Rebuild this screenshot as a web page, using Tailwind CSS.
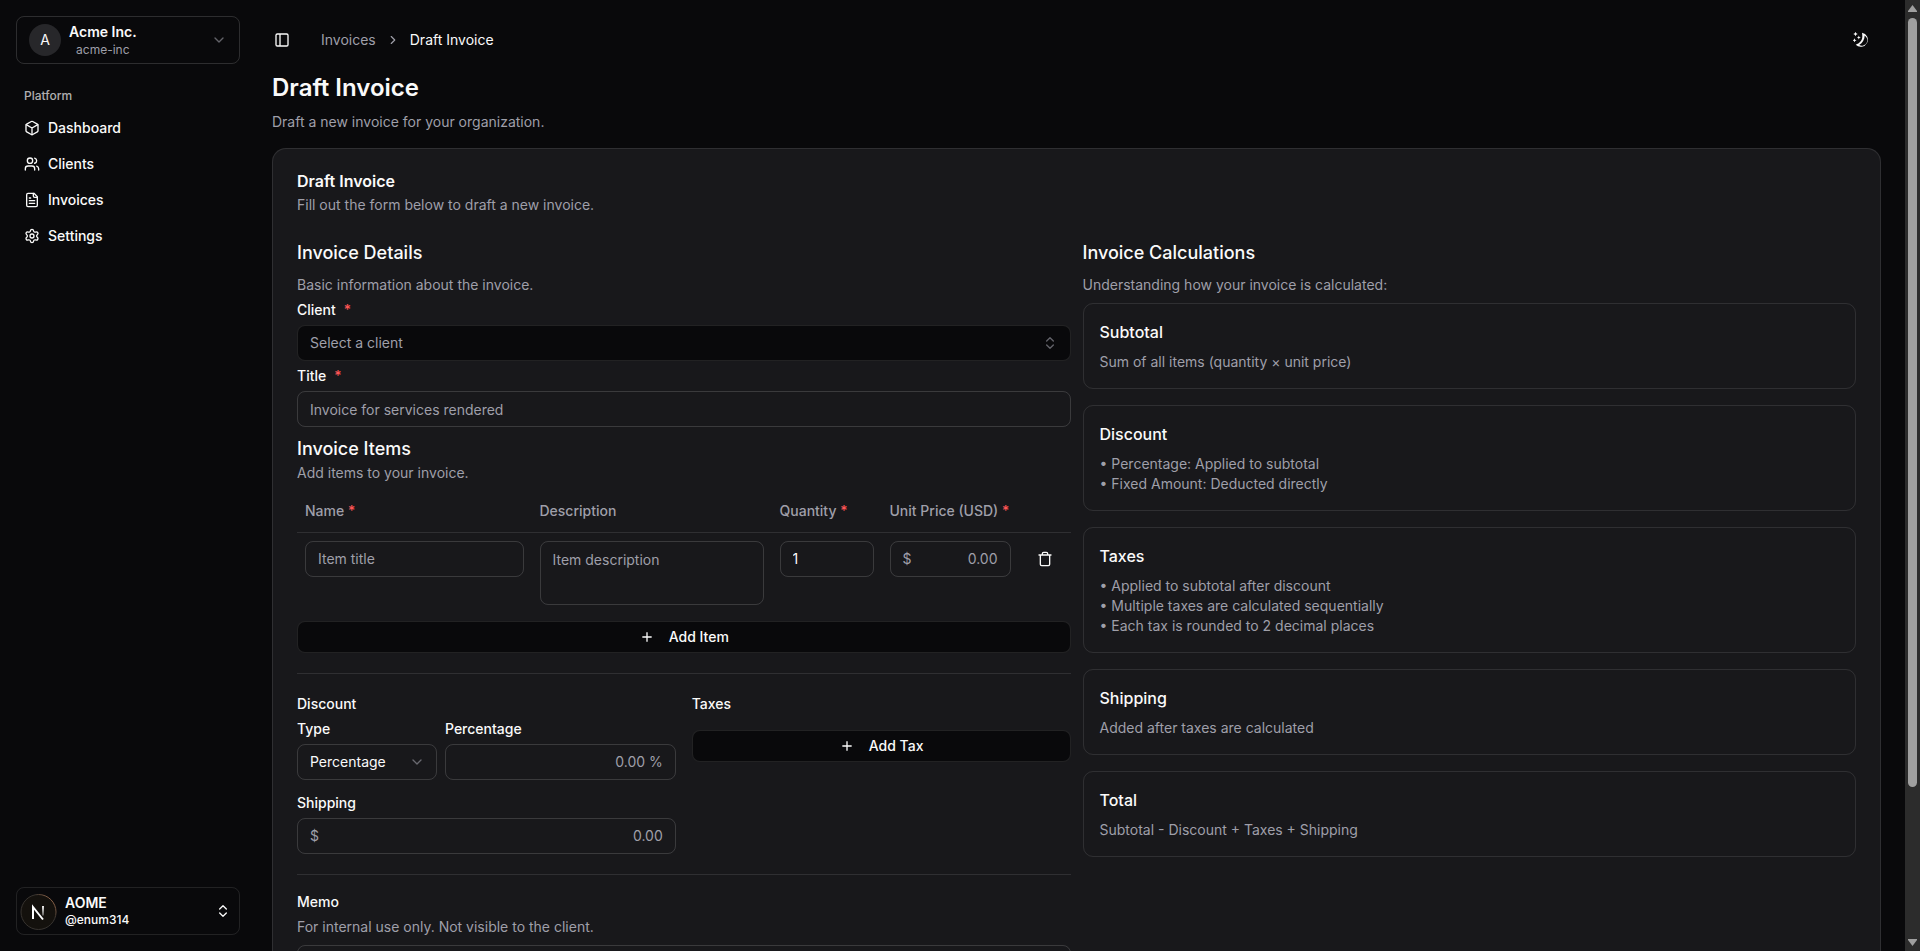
<!DOCTYPE html>
<html lang="en">
<head>
    <meta charset="UTF-8"/>
    <meta name="viewport" content="width=device-width, initial-scale=1.0"/>
    <title>Draft Invoice</title>
    <script src="https://cdn.jsdelivr.net/npm/@tailwindcss/browser@4"></script>
</head>
<body class="h-screen flex overflow-hidden bg-[#09090b] text-[#fafafa] text-sm font-[Inter,sans-serif]">
<!-- Shared icons -->
<svg class="hidden">
    <symbol id="chevron-down" viewBox="0 0 24 24"><path d="m6 9 6 6 6-6"/></symbol>
    <symbol id="chevron-right" viewBox="0 0 24 24"><path d="m9 18 6-6-6-6"/></symbol>
    <symbol id="chevrons" viewBox="0 0 24 24"><path d="m7 15 5 5 5-5M7 9l5-5 5 5"/></symbol>
    <symbol id="plus" viewBox="0 0 24 24"><path d="M5 12h14M12 5v14"/></symbol>
</svg>

<!-- Sidebar -->
<aside class="w-64 shrink-0 flex flex-col p-4">
    <button type="button" class="h-12 flex items-center gap-2 px-3 border border-white/15 rounded-[8px]">
        <span class="size-8 rounded-full bg-[#27272a] flex items-center justify-center">A</span>
        <span class="flex flex-col items-center">
            <span class="font-semibold leading-5">Acme Inc.</span>
            <span class="text-xs leading-4 text-[#9f9fa9]">acme-inc</span>
        </span>
        <svg class="size-4 ml-auto text-[#9f9fa9] opacity-60 fill-none stroke-current stroke-2" stroke-linecap="round" stroke-linejoin="round"><use href="#chevron-down"/></svg>
    </button>

    <nav class="pt-4 px-2 font-medium">
        <h2 class="h-8 flex items-center text-xs text-[#fafafa]/70">Platform</h2>
        <ul class="flex flex-col gap-1">
            <li>
                <a href="#" class="h-8 flex items-center gap-2">
                    <svg class="size-4 fill-none stroke-current stroke-2" viewBox="0 0 24 24" stroke-linecap="round" stroke-linejoin="round">
                        <path d="M21 8a2 2 0 0 0-1-1.73l-7-4a2 2 0 0 0-2 0l-7 4A2 2 0 0 0 3 8v8a2 2 0 0 0 1 1.73l7 4a2 2 0 0 0 2 0l7-4A2 2 0 0 0 21 16Z"/>
                        <path d="m3.3 7 8.7 5 8.7-5M12 22V12"/>
                    </svg>
                    Dashboard
                </a>
            </li>
            <li>
                <a href="#" class="h-8 flex items-center gap-2">
                    <svg class="size-4 fill-none stroke-current stroke-2" viewBox="0 0 24 24" stroke-linecap="round" stroke-linejoin="round">
                        <path d="M16 21v-2a4 4 0 0 0-4-4H6a4 4 0 0 0-4 4v2"/>
                        <circle cx="9" cy="7" r="4"/>
                        <path d="M22 21v-2a4 4 0 0 0-3-3.87M16 3.13a4 4 0 0 1 0 7.75"/>
                    </svg>
                    Clients
                </a>
            </li>
            <li>
                <a href="#" class="h-8 flex items-center gap-2">
                    <svg class="size-4 fill-none stroke-current stroke-2" viewBox="0 0 24 24" stroke-linecap="round" stroke-linejoin="round">
                        <path d="M15 2H6a2 2 0 0 0-2 2v16a2 2 0 0 0 2 2h12a2 2 0 0 0 2-2V7Z"/>
                        <path d="M14 2v4a2 2 0 0 0 2 2h4M10 9H8M16 13H8M16 17H8"/>
                    </svg>
                    Invoices
                </a>
            </li>
            <li>
                <a href="#" class="h-8 flex items-center gap-2">
                    <svg class="size-4 fill-none stroke-current stroke-2" viewBox="0 0 24 24" stroke-linecap="round" stroke-linejoin="round">
                        <path d="M9.671 4.136a2.34 2.34 0 0 1 4.659 0 2.34 2.34 0 0 0 3.319 1.915 2.34 2.34 0 0 1 2.33 4.033 2.34 2.34 0 0 0 0 3.831 2.34 2.34 0 0 1-2.33 4.033 2.34 2.34 0 0 0-3.319 1.915 2.34 2.34 0 0 1-4.659 0 2.34 2.34 0 0 0-3.32-1.915 2.34 2.34 0 0 1-2.33-4.033 2.34 2.34 0 0 0 0-3.831A2.34 2.34 0 0 1 6.35 6.051a2.34 2.34 0 0 0 3.319-1.915"/>
                        <circle cx="12" cy="12" r="3"/>
                    </svg>
                    Settings
                </a>
            </li>
        </ul>
    </nav>

    <button type="button" class="mt-auto h-12 flex items-center gap-2 pl-[3px] pr-2 border border-white/10 rounded-[8px] text-left">
        <svg class="size-[37px]" viewBox="0 0 37 37" fill="none">
            <defs>
                <linearGradient id="logo-fade" x1="0" y1="12" x2="0" y2="24" gradientUnits="userSpaceOnUse">
                    <stop stop-color="#fff"/>
                    <stop offset="1" stop-color="#fff" stop-opacity=".2"/>
                </linearGradient>
                <linearGradient id="logo-ring" x1="10" y1="30" x2="34" y2="10" gradientUnits="userSpaceOnUse">
                    <stop offset=".7" stop-color="#37332f"/>
                    <stop offset="1" stop-color="#8a6248"/>
                </linearGradient>
            </defs>
            <circle cx="18.5" cy="19" r="17.5" fill="#14110d" stroke="url(#logo-ring)"/>
            <path d="M13 26V14l10 12.500" stroke="#fff" stroke-width="2"/>
            <path d="M23 13v9.500" stroke="url(#logo-fade)" stroke-width="2"/>
        </svg>
        <span class="flex flex-col">
            <span class="font-semibold leading-[18px]">AOME</span>
            <span class="text-xs font-medium leading-4">@enum314</span>
        </span>
        <svg class="size-4 ml-auto fill-none stroke-current stroke-2" stroke-linecap="round" stroke-linejoin="round"><use href="#chevrons"/></svg>
    </button>
</aside>

<!-- Content -->
<main class="flex-1 min-w-0 overflow-hidden pt-2 pl-4 pr-6">
    <header class="h-16 flex items-center">
        <button type="button" aria-label="Toggle sidebar" class="size-7 -ml-1 flex items-center justify-center">
            <svg class="size-4 fill-none stroke-current stroke-2" viewBox="0 0 24 24">
                <rect x="3" y="3" width="18" height="18" rx="2"/>
                <path d="M9 3v18"/>
            </svg>
        </button>
        <nav class="ml-[25px] flex items-center gap-[10px]">
            <a href="#" class="text-[#9f9fa9]">Invoices</a>
            <svg class="size-[14px] text-[#9f9fa9] fill-none stroke-current stroke-2" stroke-linecap="round" stroke-linejoin="round"><use href="#chevron-right"/></svg>
            <span>Draft Invoice</span>
        </nav>
        <button type="button" aria-label="Toggle theme" class="size-10 ml-auto flex items-center justify-center">
            <svg class="size-4 fill-current" viewBox="0 0 16 16">
                <path fill-rule="evenodd" d="M9 .7a7.100 7.100 0 1 1-6.300 12C6.800 11.600 9.500 8.200 9.300 4.200Q9.300 2.300 9 .7ZM11.600 3.500C11.800 7.200 9.700 10.900 6.200 12.900A5.300 5.300 0 0 0 11.600 3.500Z"/>
                <path d="m2.500-.2.7 1.500 1.500.7-1.500.7-.7 1.500-.7-1.500L.3 2l1.500-.7ZM5.800 3.500l.6 1.400 1.400.6-1.400.6-.6 1.400-.6-1.400-1.400-.6 1.400-.6ZM1.500 6.300l.6 1.400 1.400.6-1.400.6-.6 1.400-.6-1.400-1.400-.6 1.400-.6Z"/>
            </svg>
        </button>
    </header>

    <h1 class="text-2xl font-semibold">Draft Invoice</h1>
    <p class="mt-2 text-[#9f9fa9]">Draft a new invoice for your organization.</p>

    <section class="mt-4 p-6 bg-[#18181b] border border-white/10 rounded-[14px]">
        <h2 class="text-base leading-4 font-semibold">Draft Invoice</h2>
        <p class="mt-1.5 text-[#9f9fa9]">Fill out the form below to draft a new invoice.</p>

        <div class="mt-6 grid grid-cols-2 gap-3">
            <form class="flex flex-col gap-2">
                <h3 class="text-lg leading-7 font-medium">Invoice Details</h3>
                <p class="text-[#9f9fa9]">Basic information about the invoice.</p>
                <label for="client" class="flex gap-2 leading-[14px] font-medium">Client <span class="text-[#ff5555]">*</span></label>
                <button id="client" type="button" class="h-9 flex items-center justify-between px-3 bg-[#09090b] border border-white/10 rounded-[8px] text-[#9f9fa9]">
                    Select a client
                    <svg class="size-4 opacity-60 fill-none stroke-current stroke-2" stroke-linecap="round" stroke-linejoin="round"><use href="#chevrons"/></svg>
                </button>
                <label for="title" class="flex gap-2 leading-[14px] font-medium">Title <span class="text-[#ff5555]">*</span></label>
                <input id="title" type="text" placeholder="Invoice for services rendered" class="h-9 px-3 border border-white/15 rounded-[8px] placeholder:text-[#9f9fa9] outline-0"/>

                <div>
                    <h3 class="text-lg leading-7 font-medium">Invoice Items</h3>
                    <p class="text-[#9f9fa9]">Add items to your invoice.</p>
                </div>
                <table class="w-full table-fixed">
                    <thead class="text-left text-[#9f9fa9]">
                    <tr class="h-[41px] border-b border-white/10">
                        <th class="px-2 font-medium">Name <span class="text-[#ff5555]">*</span></th>
                        <th class="w-60 px-2 font-medium">Description</th>
                        <th class="w-[110px] px-2 font-medium">Quantity <span class="text-[#ff5555]">*</span></th>
                        <th class="w-[137px] px-2 font-medium whitespace-nowrap">Unit Price (USD) <span class="text-[#ff5555]">*</span></th>
                        <th class="w-[52px]"></th>
                    </tr>
                    </thead>
                    <tbody>
                    <tr class="align-top">
                        <td class="p-2">
                            <input type="text" aria-label="Name" placeholder="Item title" class="block w-full h-9 px-3 border border-white/15 rounded-[8px] placeholder:text-[#9f9fa9] outline-0"/>
                        </td>
                        <td class="p-2">
                            <textarea aria-label="Description" placeholder="Item description" class="block w-full h-16 px-3 py-2 border border-white/15 rounded-[8px] placeholder:text-[#9f9fa9] resize-none outline-0"></textarea>
                        </td>
                        <td class="p-2">
                            <input type="text" aria-label="Quantity" value="1" class="block w-full h-9 px-3 border border-white/15 rounded-[8px] outline-0"/>
                        </td>
                        <td class="p-2">
                            <div class="h-9 flex items-center px-3 border border-white/15 rounded-[8px] text-[#9f9fa9]">
                                <span>$</span>
                                <input type="text" aria-label="Unit price" placeholder="0.00" class="flex-1 min-w-0 text-right placeholder:text-[#9f9fa9] outline-0"/>
                            </div>
                        </td>
                        <td class="p-2">
                            <button type="button" aria-label="Remove item" class="size-9 flex items-center justify-center">
                                <svg class="size-4 fill-none stroke-current stroke-2" viewBox="0 0 24 24" stroke-linecap="round" stroke-linejoin="round">
                                    <path d="M3 6h18M19 6v14c0 1-1 2-2 2H7c-1 0-2-1-2-2V6M8 6V4c0-1 1-2 2-2h4c1 0 2 1 2 2v2"/>
                                </svg>
                            </button>
                        </td>
                    </tr>
                    </tbody>
                </table>
                <button type="button" class="h-8 flex items-center justify-center gap-[14px] bg-[#09090b] border border-white/10 rounded-[8px] font-medium">
                    <svg class="size-4 fill-none stroke-current stroke-2"><use href="#plus"/></svg>
                    Add Item
                </button>

                <hr class="my-3 border-white/10"/>

                <div class="grid grid-cols-2 gap-4">
                    <div class="flex flex-col gap-2">
                        <h4 class="font-medium">Discount</h4>
                        <div class="grid grid-cols-[140px_1fr] gap-2">
                            <label for="discount-type" class="leading-[14px] font-medium">Type</label>
                            <label for="discount" class="leading-[14px] font-medium">Percentage</label>
                            <div class="grid items-center">
                                <select id="discount-type" class="col-start-1 row-start-1 h-9 px-3 appearance-none border border-white/15 rounded-[8px] outline-0">
                                    <option>Percentage</option>
                                    <option>Fixed Amount</option>
                                </select>
                                <svg class="col-start-1 row-start-1 size-4 mr-3 justify-self-end pointer-events-none text-[#9f9fa9] opacity-60 fill-none stroke-current stroke-2" stroke-linecap="round" stroke-linejoin="round"><use href="#chevron-down"/></svg>
                            </div>
                            <input id="discount" type="text" placeholder="0.00 %" class="min-w-0 h-9 px-3 border border-white/15 rounded-[8px] text-right placeholder:text-[#9f9fa9] outline-0"/>
                        </div>
                        <label for="shipping" class="mt-2 leading-[14px] font-medium">Shipping</label>
                        <div class="h-9 flex items-center px-3 border border-white/15 rounded-[8px] text-[#9f9fa9]">
                            <span>$</span>
                            <input id="shipping" type="text" placeholder="0.00" class="flex-1 min-w-0 text-right placeholder:text-[#9f9fa9] outline-0"/>
                        </div>
                    </div>
                    <div class="flex flex-col gap-4">
                        <h4 class="font-medium">Taxes</h4>
                        <button type="button" class="h-8 flex items-center justify-center gap-[14px] bg-[#09090b] border border-white/10 rounded-[8px] font-medium">
                            <svg class="size-4 fill-none stroke-current stroke-2"><use href="#plus"/></svg>
                            Add Tax
                        </button>
                    </div>
                </div>

                <hr class="my-3 border-white/10"/>

                <label for="memo" class="leading-[14px] font-medium">Memo</label>
                <p class="text-[#9f9fa9]">For internal use only. Not visible to the client.</p>
                <textarea id="memo" class="h-16 px-3 py-2 border border-white/15 rounded-[8px] resize-none outline-0"></textarea>
            </form>

            <div>
                <h3 class="text-lg leading-7 font-medium">Invoice Calculations</h3>
                <p class="mt-2 text-[#9f9fa9]">Understanding how your invoice is calculated:</p>
                <div class="mt-2 flex flex-col gap-4">
                    <article class="p-4 border border-white/10 rounded-[10px]">
                        <h4 class="text-base font-medium">Subtotal</h4>
                        <p class="mt-2 text-[#9f9fa9]">Sum of all items (quantity × unit price)</p>
                    </article>
                    <article class="p-4 border border-white/10 rounded-[10px]">
                        <h4 class="text-base font-medium">Discount</h4>
                        <p class="mt-2 text-[#9f9fa9]">• Percentage: Applied to subtotal<br/>• Fixed Amount: Deducted directly</p>
                    </article>
                    <article class="p-4 border border-white/10 rounded-[10px]">
                        <h4 class="text-base font-medium">Taxes</h4>
                        <p class="mt-2 text-[#9f9fa9]">• Applied to subtotal after discount<br/>• Multiple taxes are calculated sequentially<br/>• Each tax is rounded to 2 decimal places</p>
                    </article>
                    <article class="p-4 border border-white/10 rounded-[10px]">
                        <h4 class="text-base font-medium">Shipping</h4>
                        <p class="mt-2 text-[#9f9fa9]">Added after taxes are calculated</p>
                    </article>
                    <article class="p-4 border border-white/10 rounded-[10px]">
                        <h4 class="text-base font-medium">Total</h4>
                        <p class="mt-2 text-[#9f9fa9]">Subtotal - Discount + Taxes + Shipping</p>
                    </article>
                </div>
            </div>
        </div>
    </section>
</main>

<!-- Scrollbar -->
<div class="w-[15px] shrink-0 flex flex-col items-center py-1 bg-[#2c2c2c] text-[#9f9f9f]">
    <svg class="w-[9px] h-2 shrink-0 fill-current" viewBox="0 0 9 8"><path d="M4.500 1 9 7v1H0V7Z"/></svg>
    <div class="flex-1 w-[9px] py-1.5">
        <div class="h-[84%] rounded-full bg-[#9f9f9f]"></div>
    </div>
    <svg class="w-[9px] h-2 shrink-0 fill-current" viewBox="0 0 9 8"><path d="M4.500 7 0 1V0h9v1Z"/></svg>
</div>
</body>
</html>
